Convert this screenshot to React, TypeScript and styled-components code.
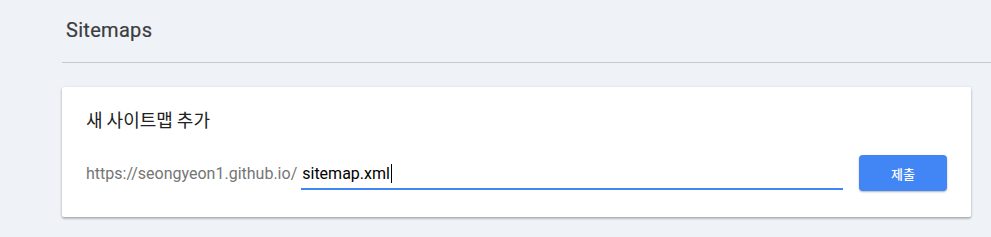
import React from "react";
import styled, { createGlobalStyle } from "styled-components";

const Global = createGlobalStyle`
  html, body { margin: 0; padding: 0; background: #eff2f7; }
  body { font-family: Roboto, "Noto Sans CJK KR", sans-serif; width: 991px; height: 237px; overflow: hidden; }
`;

const Page = styled.div`
  padding-left: 62px;
  display: flex;
  flex-direction: column;
`;

const Header = styled.div`
  height: 63px;
  border-bottom: 1px solid #c6c9cc;
  display: flex;
  align-items: center;
  padding-left: 4px;
  padding-bottom: 2px;
  box-sizing: border-box;
`;

const HeaderTitle = styled.h1`
  margin: 0;
  font-family: Roboto, sans-serif;
  font-size: 20px;
  font-weight: 400;
  color: #3a3d40;
  letter-spacing: 0.3px;
  -webkit-text-stroke: 0.2px #3a3d40;
`;

const Card = styled.section`
  margin-top: 24px;
  width: 909px;
  height: 130px;
  box-sizing: border-box;
  background: #fff;
  border-radius: 2px;
  box-shadow: 0 1px 3px rgba(0, 0, 0, 0.25), 0 2px 2px rgba(0, 0, 0, 0.12);
  padding: 19px 24px 0 24px;
  display: flex;
  flex-direction: column;
`;

const CardTitle = styled.h2`
  margin: 0;
  font-family: "Noto Sans CJK KR", sans-serif;
  font-size: 18px;
  font-weight: 400;
  color: #212121;
  line-height: 26px;
`;

const Row = styled.div`
  margin-top: 23px;
  display: flex;
  align-items: center;
`;

const Prefix = styled.span`
  font-family: Roboto, sans-serif;
  font-size: 16px;
  color: #757575;
  margin-right: 4px;
`;

const Field = styled.div`
  width: 542px;
  height: 31px;
  border-bottom: 2px solid #4285f4;
  box-sizing: border-box;
  display: flex;
  align-items: center;
  margin-top: 2px;
`;

const Value = styled.span`
  font-family: Roboto, sans-serif;
  font-size: 16px;
  color: #000;
  padding-left: 1px;
`;

const Caret = styled.span`
  display: inline-block;
  width: 1px;
  height: 19px;
  background: #000;
  margin-left: 1px;
`;

const Submit = styled.button`
  margin-left: 16px;
  width: 88px;
  height: 36px;
  border: none;
  border-radius: 4px;
  background: #4285f4;
  color: #fff;
  font-family: "Noto Sans CJK KR", sans-serif;
  font-size: 13px;
  font-weight: 500;
  box-shadow: 0 1px 2px rgba(0, 0, 0, 0.3);
  cursor: pointer;
`;

export default function App() {
  return (
    <>
      <Global />
      <Page>
        <Header>
          <HeaderTitle>Sitemaps</HeaderTitle>
        </Header>
        <Card>
          <CardTitle>새 사이트맵 추가</CardTitle>
          <Row>
            <Prefix>https://seongyeon1.github.io/</Prefix>
            <Field>
              <Value>sitemap.xml</Value>
              <Caret />
            </Field>
            <Submit>제출</Submit>
          </Row>
        </Card>
      </Page>
    </>
  );
}
